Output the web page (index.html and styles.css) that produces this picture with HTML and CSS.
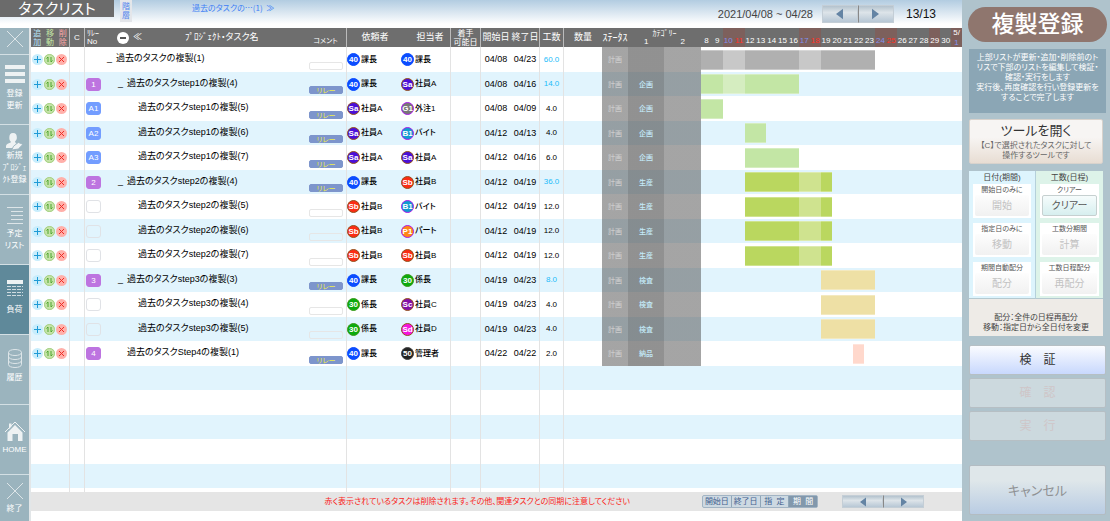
FILE: index.html
```html
<!DOCTYPE html>
<html lang="ja">
<head>
<meta charset="utf-8">
<title>タスクリスト</title>
<link rel="stylesheet" href="styles.css">
</head>
<body>
<div class="workspace">
  <header class="topbar">
    <h1 class="title">タスクリスト</h1>
    <button class="level-btn">階<br>層</button>
    <a class="crumb" href="#">過去のタスクの…(1)&nbsp; ≫</a>
    <div class="period">
      <span class="period-text">2021/04/08 ~ 04/28</span>
      <div class="pager">
        <button aria-label="前へ"><svg viewBox="0 0 8 12"><path d="M8 0v12L0 6z"/></svg></button>
        <button aria-label="次へ"><svg viewBox="0 0 8 12"><path d="M0 0v12l8-6z"/></svg></button>
      </div>
      <span class="count">13/13</span>
    </div>
  </header>
  <div class="below">
    <nav class="sidebar">
      <button class="side-item side-close" aria-label="閉じる"><svg class="ico-x" viewBox="0 0 16 16"><path d="M0 0l16 16M16 0L0 16"/></svg></button>
      <button class="side-item"><svg class="ico-bars" viewBox="0 0 20 20"><path d="M0 1h20v4H0zM0 8h20v4H0zM0 15h20v4H0z"/></svg><span>登録<br>更新</span></button>
      <button class="side-item"><svg class="ico-user" viewBox="0 0 18 18"><path d="M7.500 0c3 0 4 2 4 5 0 2-1 3-2 4l1 2 3 1-3 4H0v-2c0-2 2-3 5-4V9C4 8 3.500 7 3.500 5c0-3 1-5 4-5z"/><path class="pen" d="M8 14l5-4 5 2-5 5-7 1z"/></svg><span>新規<br>ﾌﾟﾛｼﾞｪ<br>ｸﾄ登録</span></button>
      <button class="side-item"><svg class="ico-list" viewBox="0 0 16 17"><path d="M0 .5h16M4 4.5h12M4 8.500h12M4 12.500h12M0 16.500h16"/></svg><span>予定<br>リスト</span></button>
      <button class="side-item active"><svg class="ico-load" viewBox="0 0 16 16"><path d="M0 0h16v4H0z"/><path class="dash" d="M0 6.500h16M0 9.500h16M0 12.500h16M0 15.500h16"/></svg><span>負荷</span></button>
      <button class="side-item"><svg class="ico-db" viewBox="0 0 14 19"><path d="M.5 3.500c0-4 13-4 13 0s-13 4-13 0v12c0 4 13 4 13 0v-12M.5 7.500c0 4 13 4 13 0M.5 11.500c0 4 13 4 13 0"/></svg><span>履歴</span></button>
      <button class="side-item"><svg class="ico-home" viewBox="0 0 20 20"><path d="M2.500 11.500L10 4l7.500 7.500V20H13v-7H7.500v7h-5zM4 2.500h2.500v3L4 8z"/><path class="roof" d="M0 11L10 1l10 10"/></svg><span>HOME</span></button>
      <button class="side-item side-end"><svg class="ico-x" viewBox="0 0 16 16"><path d="M0 0l16 16M16 0L0 16"/></svg><span>終了</span></button>
    </nav>
    <main class="content">
      <table class="tasks">
        <colgroup>
          <col class="w-ops"><col class="w-c"><col class="w-relay"><col class="w-name"><col class="w-comment">
          <col class="w-req"><col class="w-asg"><col class="w-avail"><col class="w-start"><col class="w-end">
          <col class="w-hours"><col class="w-qty"><col class="w-status"><col class="w-cat1"><col class="w-cat2"><col>
        </colgroup>
        <thead>
          <tr>
            <th class="line"><div class="ops-head"><span class="add">追<br>加</span><span class="move">移<br>動</span><span class="del">削<br>除</span></div></th>
            <th class="line c-head">C</th>
            <th class="two relay-head">ﾘﾚｰ<br>No</th>
            <th><div class="name-head"><button class="fold" aria-label="折りたたむ"></button><span class="dbl">≪</span><span class="name-label">ﾌﾟﾛｼﾞｪｸﾄ・タスク名</span></div></th>
            <th class="line low">コメント</th>
            <th class="req-head">依頼者</th>
            <th class="line asg-head">担当者</th>
            <th class="line two">着手<br>可能日</th>
            <th>開始日</th>
            <th class="line">終了日</th>
            <th class="line">工数</th>
            <th>数量</th>
            <th class="half">ｽﾃｰﾀｽ</th>
            <th class="cat-head" colspan="2"><div>ｶﾃｺﾞﾘｰ</div><div class="cat-nums"><span>1</span><span>2</span></div></th>
            <th><div class="days" id="days"></div></th>
          </tr>
        </thead>
        <tbody id="rows"></tbody>
      </table>
      <footer class="footbar">
        <p class="warning">赤く表示されているタスクは削除されます。その他、関連タスクとの同期に注意してください</p>
        <div class="modes">
          <button>開始日</button><button>終了日</button><button>指&nbsp; 定</button><button class="on">期&nbsp; 間</button>
        </div>
        <div class="pager small">
          <button aria-label="前へ"><svg viewBox="0 0 8 12"><path d="M8 0v12L0 6z"/></svg></button>
          <button aria-label="次へ"><svg viewBox="0 0 8 12"><path d="M0 0v12l8-6z"/></svg></button>
        </div>
      </footer>
    </main>
  </div>
</div>
<aside class="panel">
  <h2 class="pill">複製登録</h2>
  <p class="info">上部リストが更新・追加・削除前のト<br>リスで下部のリストを編集して検証・<br>確認・実行をします<br>実行後、再度確認を行い登録更新を<br>することで完了します</p>
  <button class="open-tool"><span class="open-title">ツールを開く</span><span>【C】で選択されたタスクに対して</span><span>操作するツールです</span></button>
  <section class="tools">
    <div class="tool-col date">
      <h3>日付(期間)</h3>
      <div class="card"><span>開始日のみに</span><button disabled>開始</button></div>
      <div class="card"><span>指定日のみに</span><button disabled>移動</button></div>
      <div class="card"><span>期間自動配分</span><button disabled>配分</button></div>
    </div>
    <div class="tool-col effort">
      <h3>工数(日程)</h3>
      <div class="card"><span>クリアー</span><button class="clear">クリアー</button></div>
      <div class="card"><span>工数分期間</span><button disabled>計算</button></div>
      <div class="card"><span>工数日程配分</span><button disabled>再配分</button></div>
    </div>
    <p class="tool-note">配分：全件の日程再配分<br>移動：指定日から全日付を変更</p>
  </section>
  <div class="steps">
    <button class="step ready">検&emsp;証</button>
    <button class="step" disabled>確&emsp;認</button>
    <button class="step" disabled>実&emsp;行</button>
  </div>
  <button class="cancel">キャンセル</button>
</aside>
<script src="tasks.js"></script>
</body>
</html>
```

FILE: styles.css
```css
* { box-sizing: border-box; }

body {
  margin: 0;
  min-height: 100vh;
  display: flex;
  background: #fff;
  color: #222;
  font-family: "Liberation Sans", "Noto Sans CJK JP", sans-serif;
  font-size: 9px;
  line-height: 1;
  font-feature-settings: "palt";
}

button {
  font: inherit;
  font-feature-settings: inherit;
  color: inherit;
  border: 0;
  padding: 0;
  margin: 0;
  background: none;
}

h1, h2, h3, p { margin: 0; font-weight: 400; }
svg { display: block; }

.workspace { flex: 1; min-width: 0; display: flex; flex-direction: column; }

/* top bar */
.topbar {
  height: 28px;
  display: flex;
  align-items: flex-start;
  background: linear-gradient(#b2cce1, #fff 24px);
}
.title {
  width: 114px;
  height: 17px;
  background: #6b6b6b;
  color: #fff;
  font-size: 15px;
  line-height: 17px;
  text-align: center;
}
.level-btn {
  width: 12px;
  height: 22px;
  margin-left: 6px;
  background: #e4e6ea;
  color: #4f83ee;
  font-size: 8px;
  line-height: 9px;
}
.crumb {
  margin-left: 60px;
  color: #3f80f5;
  font-family: "Noto Sans CJK JP", sans-serif;
  font-size: 8px;
  line-height: 16px;
  text-decoration: none;
}
.period {
  margin-left: auto;
  padding: 5px 26px 0 0;
  display: flex;
  align-items: center;
}
.period-text { font-size: 11px; color: #444; margin-right: 9px; }
.count { font-size: 12px; color: #111; margin-left: 12px; -webkit-text-stroke: 0; }

.pager { display: flex; width: 72px; height: 18px; }
.pager button {
  flex: 1;
  display: flex;
  align-items: center;
  justify-content: center;
  background: linear-gradient(#b3c2cd, #dde4e9 40%, #b7c7d5);
  border: 1px solid #c4ced6;
}
.pager button + button { border-left-color: #888; }
.pager svg { width: 7px; height: 12px; fill: #6484a4; }
.pager.small { width: 82px; height: 13px; }
.pager.small svg { width: 6px; height: 10px; }

.below { flex: 1; display: flex; }

/* sidebar */
.sidebar {
  width: 31px;
  display: flex;
  flex-direction: column;
  background: #9bb4be;
  border-right: 2px solid #e2e6e8;
}
.side-item {
  height: 70px;
  display: flex;
  flex-direction: column;
  align-items: center;
  justify-content: flex-end;
  gap: 4px;
  padding-bottom: 12px;
  border-bottom: 1px solid #d3dfe4;
  color: #fff;
  font-size: 8px;
  line-height: 12px;
  white-space: nowrap;
}
.side-item span { display: block; }
.side-item.active { background: #5f899a; }
.side-close { height: 27px; padding-bottom: 7px; }
.side-end { flex: 1; justify-content: flex-start; padding-top: 8px; border: 0; }
.side-item svg { fill: #eef2f3; }
.side-item .ico-x { width: 16px; height: 16px; stroke: #dde5e8; stroke-width: 1; }
.ico-bars { width: 20px; height: 20px; }
.ico-user { width: 17px; height: 17px; flex: none; }
.side-item .pen { stroke: #9bb4be; stroke-width: 1; }
.side-item .ico-list, .side-item .ico-db { fill: none; stroke: #dde5e8; }
.ico-list { width: 16px; height: 17px; }
.ico-load { width: 16px; height: 16px; margin-bottom: 4px; }
.dash { stroke: #cfdbe0; stroke-width: 1; stroke-dasharray: 4 1; }
.ico-db { width: 14px; height: 19px; }
.ico-home { width: 20px; height: 20px; }
.roof { fill: none; stroke: #eef2f3; }
.side-item:nth-child(3) { padding-bottom: 8px; gap: 0; }
.side-item:nth-child(5) { padding-bottom: 18px; }
.side-item:nth-child(6) { padding-bottom: 20px; }
.side-item:nth-child(7) { padding-bottom: 18px; gap: 3px; }

/* task table */
.content { flex: 1; min-width: 0; }
.tasks {
  width: 100%;
  table-layout: fixed;
  border-collapse: separate;
  border-spacing: 0;
}
.w-ops { width: 39px; }
.w-c { width: 15px; }
.w-relay { width: 20px; }
.w-name { width: 200px; }
.w-comment { width: 42px; }
.w-req { width: 53px; }
.w-asg { width: 51px; }
.w-avail, .w-start { width: 30px; }
.w-end { width: 29px; }
.w-hours { width: 24px; }
.w-qty { width: 38px; }
.w-status { width: 26px; }
.w-cat1 { width: 36px; }
.w-cat2 { width: 37px; }

.tasks th, .tasks td { padding: 0; white-space: nowrap; }
.tasks thead th {
  height: 19px;
  background: #6e6e6e;
  color: #fff;
  font-weight: 400;
}
.line { border-right: 1px solid #e3e3e3; }
.tasks thead .line { border-right-color: #bbb; }
.tasks thead .two { font-size: 8px; line-height: 9px; }
.tasks thead .relay-head { font-size: 8px; line-height: 8px; text-align: left; padding-left: 2px; }
.ops-head { display: flex; justify-content: space-around; font-size: 8px; line-height: 9px; }
.add { color: #b5e4fa; }
.move { color: #c3e6a5; }
.del { color: #ffa8a8; }
.c-head { font-size: 8px; }
.name-head { display: flex; align-items: center; padding-left: 12px; }
.fold {
  width: 12px;
  height: 12px;
  display: grid;
  place-items: center;
  border-radius: 50%;
  background: #fff;
}
.fold::before { content: ""; width: 6px; height: 2px; background: #555; }
.dbl { margin-left: 4px; }
.name-label { margin-left: 43px; }
.tasks thead .low { font-size: 7px; vertical-align: bottom; padding-bottom: 3px; }
.tasks thead .req-head { padding-left: 3px; }
.tasks thead .asg-head { padding-left: 10px; }
.tasks thead .half { font-size: 10px; }
.tasks thead .cat-head { font-size: 8px; line-height: 9px; }
.cat-nums { display: flex; justify-content: space-around; line-height: 8px; }

.days { display: grid; grid-template-columns: repeat(24, 1fr); height: 19px; font-size: 8px; }
.days span { display: flex; align-items: flex-end; justify-content: center; line-height: 8px; padding-bottom: 2px; text-align: center; }
.days .tint { background: #7d605c; }
.days .sat { color: #7f90f0; }
.days .sun { color: #ff3226; }
.days .month { flex-direction: column; align-items: center; justify-content: space-between; padding: 0; line-height: 9px; }
.month b { font-weight: 400; color: #fff; }

.tasks tbody td { height: 25px; }
.tasks tbody tr:nth-child(even) td { height: 24px; background-color: #e1f4fd; }
.tasks tbody .tail td { height: 4px; background-color: #fff; }

.ops { display: flex; gap: 1px; padding-left: 1px; }
.ops button { width: 11px; height: 11px; border-radius: 50%; }
.ops svg { width: 11px; height: 11px; fill: none; stroke-width: 1; }
.op-add { background: #c8edfc; stroke: #1f9bd6; }
.op-move { background: #c5e3a8; stroke: #4fa52e; }
.op-del { background: #ffb0aa; stroke: #ee2d25; }

.relay {
  width: 15px;
  height: 13px;
  display: block;
  margin-left: 1px;
  border-radius: 3px;
  border: 1px solid #e0e2e6;
  color: #fff;
  font-size: 8px;
  line-height: 11px;
  text-align: center;
}
.relay.group { background: #bd74e0; border-color: #bd74e0; }
.relay.chain { background: #739dff; border-color: #739dff; }

.task-name { display: flex; padding-bottom: 2px; color: #000; }
.task-name i { width: 9px; font-style: normal; flex: none; }
.level-0 { padding-left: 2px; }
.level-1 { padding-left: 13px; }
.level-2 { padding-left: 24px; }

.tasks tbody .note-cell { vertical-align: bottom; padding-bottom: 2px; }
.note {
  display: block;
  width: 34px;
  height: 8px;
  margin-left: 4px;
  border: 1px solid #e6e6e6;
  border-radius: 2px;
  font-size: 7px;
  line-height: 7px;
  text-align: center;
}
.note.set { background: #7d95cc; border-color: #7d95cc; color: #eef04a; }

.person { display: flex; align-items: center; gap: 1px; font-size: 8px; font-weight: 500; color: #000; }
.asg-cell .person { padding-left: 1px; }
.avatar {
  width: 13px;
  height: 13px;
  border-radius: 50%;
  border: 1px solid;
  color: #fff;
  font: 700 8px/12px "Liberation Sans", sans-serif;
  text-align: center;
  flex: none;
}
.p-40 { background: #0b4cff; border-color: #0b4cff; }
.p-30 { background: #0caa0c; border-color: #3a9a1c; }
.p-50 { background: #222; border-color: #444; }
.p-Sa { background: #4a0fd8; border-color: #94501c; }
.p-Sb { background: #fb2c14; border-color: #94501c; }
.p-Sc { background: #8410a8; border-color: #94501c; }
.p-Sd { background: #f514e0; border-color: #94501c; }
.p-G1 { background: #777; border-color: #a81ce8; }
.p-B1 { background: #119bd0; border-color: #a81ce8; }
.p-P1 { background: #ff8617; border-color: #a81ce8; }

.date-cell, .hours { text-align: center; }
.date-cell { color: #000; }
.hours { font-size: 8px; color: #000; }
.hours.sum { color: #22bcfa; }
.status, .cat1 { font-size: 7px; font-weight: 500; text-align: center; }
.status, .cat2 { background-image: linear-gradient(rgba(75, 75, 75, .5), rgba(75, 75, 75, .5)); color: #ccc; }
.cat1 { background-image: linear-gradient(rgba(72, 72, 72, .6), rgba(72, 72, 72, .6)); color: #c4ebfa; }

.gantt { display: grid; grid-template-columns: repeat(24, 1fr); height: 20px; }
.bar, .off { grid-row: 1; }
.bar { border: solid rgba(255, 255, 255, .3); border-width: 1px 0; }
.off { background: rgba(255, 255, 255, .3); }
.k-all { background: #b0b0b0; }
.k-plan { background: #c3e6a5; }
.k-make { background: #bad75f; }
.k-check { background: #eee0a5; }
.k-ship { background: #ffd8cc; }

/* footer */
.footbar {
  height: 19px;
  display: flex;
  align-items: center;
  background: #e5e5e5;
  padding-right: 38px;
}
.warning { margin-left: auto; color: #fa2318; font-size: 8px; }
.modes {
  display: flex;
  width: 116px;
  height: 13px;
  margin: 0 24px 0 72px;
  border: 1px solid #a2b4c4;
  border-radius: 2px;
  background: #cdd9e2;
  color: #44618e;
  font-size: 8px;
  line-height: 10px;
}
.modes button { flex: 1; white-space: nowrap; }
.modes button + button { border-left: 1px solid #8fa5b8; }
.modes .on { background: #8298ac; color: #fff; }

/* right panel */
.panel {
  width: 148px;
  padding: 7px 4px 7px 7px;
  display: flex;
  flex-direction: column;
  background: #afc3cc;
  color: #444;
}
.pill {
  height: 35px;
  margin-left: -1px;
  margin-right: -1px;
  border-radius: 18px;
  background: #8f766e;
  color: #fff;
  font-size: 23px;
  font-weight: 500;
  line-height: 35px;
  text-align: center;
}
.info {
  height: 64px;
  margin-top: 7px;
  padding-top: 4px;
  background: #8ba6b5;
  color: #fff;
  font-size: 8px;
  line-height: 10px;
  text-align: center;
  white-space: nowrap;
}
.open-tool {
  height: 45px;
  margin: 6px 3px 0 0;
  display: flex;
  flex-direction: column;
  align-items: center;
  border: 1px solid #d8d2cc;
  border-radius: 2px;
  background: linear-gradient(#f7f5f3 40%, #e8ddd3);
  color: #666;
  font-size: 8px;
  line-height: 10px;
  white-space: nowrap;
}
.open-title { font-size: 13px; line-height: 21px; color: #333; }
.tools {
  margin: 7px 3px 0 0;
  display: grid;
  grid-template-columns: 1fr 1fr;
}
.tool-col {
  height: 128px;
  padding: 2px 4px 0;
  display: flex;
  flex-direction: column;
  gap: 5px;
  border-bottom: 1px solid #b5c9d0;
  text-align: center;
}
.tool-col h3 { font-size: 8px; line-height: 10px; margin-bottom: -4px; }
.date { background: #ddf4fd; border-right: 1px solid #b5d0da; }
.effort { background: #ddf3e9; }
.card { background: #fff; height: 34px; padding: 1px 2px 2px; font-size: 7px; line-height: 10px; color: #555; }
.card span { display: block; }
.card button {
  display: block;
  width: 100%;
  height: 21px;
  border-radius: 2px;
  background: linear-gradient(#fdfdfd, #f1f1f1);
  color: #c2c2c2;
  font-size: 10px;
  line-height: 20px;
}
.card .clear { border: 1px solid #c6d0d0; background: linear-gradient(#f6fcfc, #d7efef); color: #555; line-height: 18px; }
.tool-note {
  grid-column: 1 / -1;
  padding: 14px 0 3px;
  background: #eeebe7;
  font-size: 8px;
  line-height: 10px;
  text-align: center;
  white-space: nowrap;
}
.steps { display: flex; flex-direction: column; gap: 3px; margin-top: 9px; }
.step {
  height: 30px;
  border: 1px solid #b6bfc4;
  border-radius: 2px;
  background: #ccd9de;
  color: #cfc6c8;
  font-size: 12px;
}
.step.ready { background: linear-gradient(#fbfcff, #c8d8fd); color: #333; }
.cancel {
  height: 50px;
  margin-top: 24px;
  border: 1px solid #b3bcc2;
  border-radius: 2px;
  background: linear-gradient(#dfe7ea 30%, #b9cce3);
  color: #8f9193;
  font-size: 13px;
}
```

FILE: tasks.js
```js
const names = { 40: "課長", 30: "係長", 50: "管理者", Sa: "社員A", Sb: "社員B", Sc: "社員C", Sd: "社員D", G1: "外注1", B1: "バイト", P1: "パート" };
const kinds = { "": "k-all", "企画": "k-plan", "生産": "k-make", "検査": "k-check", "納品": "k-ship" };

// level, open marker, relay no, name, comment, requester, assignee, start day, end day, hours, category
const tasks = [
  [0, 1, null, "過去のタスクの複製(1)", "", "40", "40", 8, 23, "60.0", ""],
  [1, 1, "1", "過去のタスクstep1の複製(4)", "リレー", "40", "Sa", 8, 16, "14.0", "企画"],
  [2, 0, "A1", "過去のタスクstep1の複製(5)", "リレー", "Sa", "G1", 8, 9, "4.0", "企画"],
  [2, 0, "A2", "過去のタスクstep1の複製(6)", "リレー", "Sa", "B1", 12, 13, "4.0", "企画"],
  [2, 0, "A3", "過去のタスクstep1の複製(7)", "リレー", "Sa", "Sa", 12, 16, "6.0", "企画"],
  [1, 1, "2", "過去のタスクstep2の複製(4)", "リレー", "40", "Sb", 12, 19, "36.0", "生産"],
  [2, 0, "", "過去のタスクstep2の複製(5)", "", "Sb", "B1", 12, 19, "12.0", "生産"],
  [2, 0, "", "過去のタスクstep2の複製(6)", "", "Sb", "P1", 12, 19, "12.0", "生産"],
  [2, 0, "", "過去のタスクstep2の複製(7)", "", "Sb", "Sb", 12, 19, "12.0", "生産"],
  [1, 1, "3", "過去のタスクstep3の複製(3)", "リレー", "40", "30", 19, 23, "8.0", "検査"],
  [2, 0, "", "過去のタスクstep3の複製(4)", "", "30", "Sc", 19, 23, "4.0", "検査"],
  [2, 0, "", "過去のタスクstep3の複製(5)", "", "30", "Sd", 19, 23, "4.0", "検査"],
  [1, 0, "4", "過去のタスクStep4の複製(1)", "リレー", "40", "50", 22, 22, "2.0", "納品"],
];
const totalRows = 18;

const pad = n => String(n).padStart(2, "0");
const person = id => `<div class="person"><span class="avatar p-${id}">${id}</span><span>${names[id]}</span></div>`;
const ops = `<div class="ops">
  <button class="op-add" aria-label="追加"><svg viewBox="0 0 11 11"><path d="M5.500 2v7M2 5.500h7"/></svg></button>
  <button class="op-move" aria-label="移動"><svg viewBox="0 0 11 11"><circle cx="5.500" cy="5.500" r="5" stroke="#a5d084"/><path d="M4 8V3L2.500 4.500M7 3v5l1.500-1.500"/></svg></button>
  <button class="op-del" aria-label="削除"><svg viewBox="0 0 11 11"><path d="M3 3l5 5M8 3L3 8"/></svg></button>
</div>`;

function relay(no) {
  if (no === null) return "";
  const kind = no === "" ? "" : no[0] === "A" ? "chain" : "group";
  return `<span class="relay ${kind}">${no}</span>`;
}

function gantt(start, end, cat) {
  let html = `<span class="bar ${kinds[cat]}" style="grid-column:${start - 7}/${end - 6}"></span>`;
  for (const d of [10, 17]) {
    if (start <= d && end > d) html += `<span class="off" style="grid-column:${d - 7}/${d - 5}"></span>`;
  }
  return `<div class="gantt">${html}</div>`;
}

function row([level, open, no, name, note, req, asg, start, end, hours, cat]) {
  return `<tr><td class="line">${ops}</td><td class="line"></td><td>${relay(no)}</td>
    <td><div class="task-name level-${level}"><i>${open ? "_" : ""}</i><span>${name}</span></div></td>
    <td class="line note-cell"><span class="note ${note ? "set" : ""}">${note}</span></td>
    <td>${person(req)}</td><td class="line asg-cell">${person(asg)}</td><td class="line"></td>
    <td class="date-cell">04/${pad(start)}</td><td class="line date-cell">04/${pad(end)}</td>
    <td class="line hours ${open ? "sum" : ""}">${hours}</td><td></td>
    <td class="status">計画</td><td class="cat1">${cat}</td><td class="cat2"></td><td>${gantt(start, end, cat)}</td></tr>`;
}

const lined = new Set([0, 1, 4, 6, 7, 9, 10]);
const cells = Array.from({ length: 16 }, (_, i) => `<td${lined.has(i) ? ' class="line"' : ""}></td>`).join("");
const blank = totalRows - tasks.length;
document.getElementById("rows").innerHTML =
  tasks.map(row).join("") + `<tr>${cells}</tr>`.repeat(blank) + `<tr class="tail">${cells}</tr>`;

let days = "";
for (let d = 8; d <= 30; d++) {
  const cls = [10, 17, 24].includes(d) ? "tint sat" : [11, 18, 25].includes(d) ? "tint sun" : d === 29 ? "tint" : "";
  days += `<span class="${cls}">${d}</span>`;
}
document.getElementById("days").innerHTML = days + '<span class="tint sat month"><b>5/</b>1</span>';
```
